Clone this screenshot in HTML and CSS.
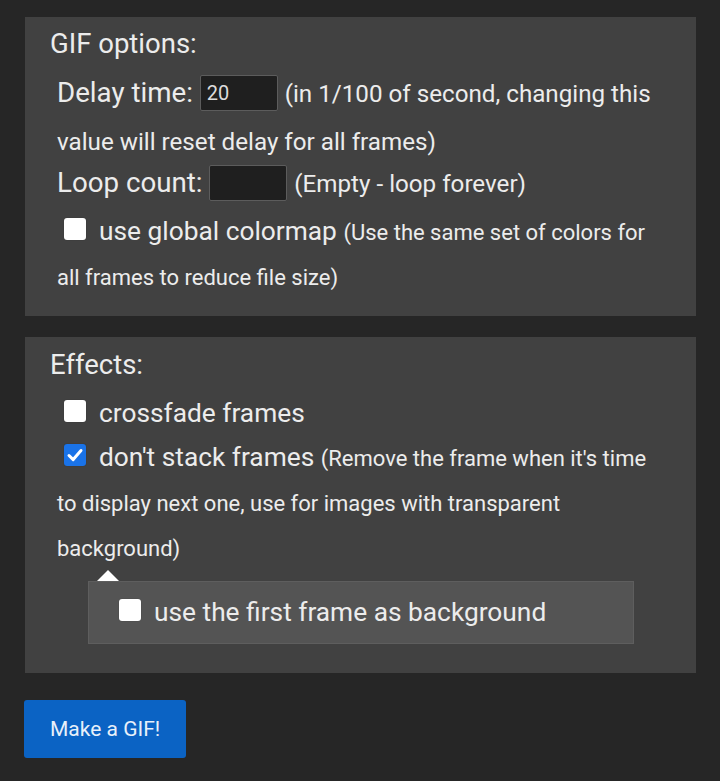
FILE: index.html
```html
<!DOCTYPE html>
<html lang="en">

<head>
  <meta charset="UTF-8">
  <meta name="viewport" content="width=device-width, initial-scale=1.0">
  <title>GIF options</title>
  <link rel="stylesheet" href="styles.css">
</head>
<body>
  <div class="panel">
    <h2 class="panel-title">GIF options:</h2>
    <p class="opt opt-delay">Delay time: <span class="num">20</span> <span class="note">(in 1/100 of second, changing this value will reset delay for all frames)</span></p>
    <p class="opt opt-loop">Loop count: <span class="num">&nbsp;</span> <span class="note">(Empty - loop forever)</span></p>
    <p class="opt opt-check opt-colormap"><span class="cb"></span>use global colormap <span class="note note-sm">(Use the same set of colors for all frames to reduce file size)</span></p>
  </div>

  <div class="panel panel-effects">
    <h2 class="panel-title">Effects:</h2>
    <p class="opt opt-check opt-crossfade"><span class="cb"></span>crossfade frames</p>
    <p class="opt opt-check opt-stack"><span class="cb cb-on"><svg width="22" height="22" viewBox="0 0 22 22"><path d="M5 11.5 L9.2 15.6 L17 6.5" fill="none" stroke="#fff" stroke-width="3" stroke-linecap="round" stroke-linejoin="round"/></svg></span>don't stack frames <span class="note note-sm">(Remove the frame when it's time to display next one, use for images with transparent background)</span></p>
    <div class="arrow"></div>
    <div class="sub-box">
      <p class="opt opt-check opt-first"><span class="cb"></span>use the first frame as background</p>
    </div>
  </div>

  <button class="make-btn">Make a GIF!</button>
</body>

</html>
```

FILE: styles.css
```css
    body {
      margin: 0;
      padding: 17px 24px 40px 25px;
      background-color: #262626;
      color: #ececec;
      font-family: Roboto, "Noto Sans", sans-serif;
    }
    .panel {
      background-color: #414141;
      padding: 11px 31px 17px 25px;
      margin-bottom: 21px;
    }
    .panel-effects {
      padding-top: 12px;
      padding-bottom: 29px;
      margin-bottom: 27px;
    }
    .panel-title {
      margin: 0;
      font-size: 27.5px;
      font-weight: normal;
      line-height: 32px;
    }
    .opt {
      margin: 0 0 0 7px;
      font-size: 27.7px;
    }
    .opt-check {
      font-size: 26.3px;
    }
    .note {
      font-size: 24.2px;
      line-height: 1;
    }
    .note-sm {
      font-size: 22px;
    }
    .opt-delay {
      margin-top: 9px;
      line-height: 48px;
    }
    .opt-loop {
      line-height: 36px;
    }
    .opt-colormap {
      margin-top: 8px;
      line-height: 45px;
    }
    .opt-crossfade {
      margin-top: 10px;
      line-height: 44px;
    }
    .opt-stack {
      line-height: 45px;
    }
    .num {
      display: inline-block;
      box-sizing: border-box;
      width: 78px;
      height: 36px;
      margin: -4px 0;
      padding: 0 6px;
      background-color: #1f1f1f;
      border: 1px solid #5c5c5c;
      border-radius: 2px;
      color: #dcdcdc;
      font-size: 20px;
      line-height: 35px;
      vertical-align: 2px;
    }
    .cb {
      display: inline-block;
      width: 22px;
      height: 22px;
      margin: 0 13px 0 7px;
      background-color: #fff;
      border-radius: 3px;
      vertical-align: baseline;
      box-shadow: 0 0 1px rgba(0, 0, 0, 0.4);
    }
    .cb svg {
      display: block;
    }
    .cb-on {
      background-color: #1a73e8;
    }
    .arrow {
      width: 0;
      height: 0;
      margin-left: 47px;
      border-left: 11px solid transparent;
      border-right: 11px solid transparent;
      border-bottom: 11px solid #fff;
    }
    .sub-box {
      margin: 0 31px 0 38px;
      background-color: #545454;
      border: 1px solid #5e5e5e;
      padding-left: 23px;
    }
    .opt-first {
      margin: 0;
      line-height: 61px;
    }
    .make-btn {
      display: inline-block;
      height: 58px;
      margin-left: -1px;
      padding: 0 26px;
      background-color: #0b63c4;
      color: #e8f0fa;
      border: none;
      border-radius: 3px;
      font-family: Roboto, "Noto Sans", sans-serif;
      font-size: 21px;
      cursor: pointer;
    }
```
